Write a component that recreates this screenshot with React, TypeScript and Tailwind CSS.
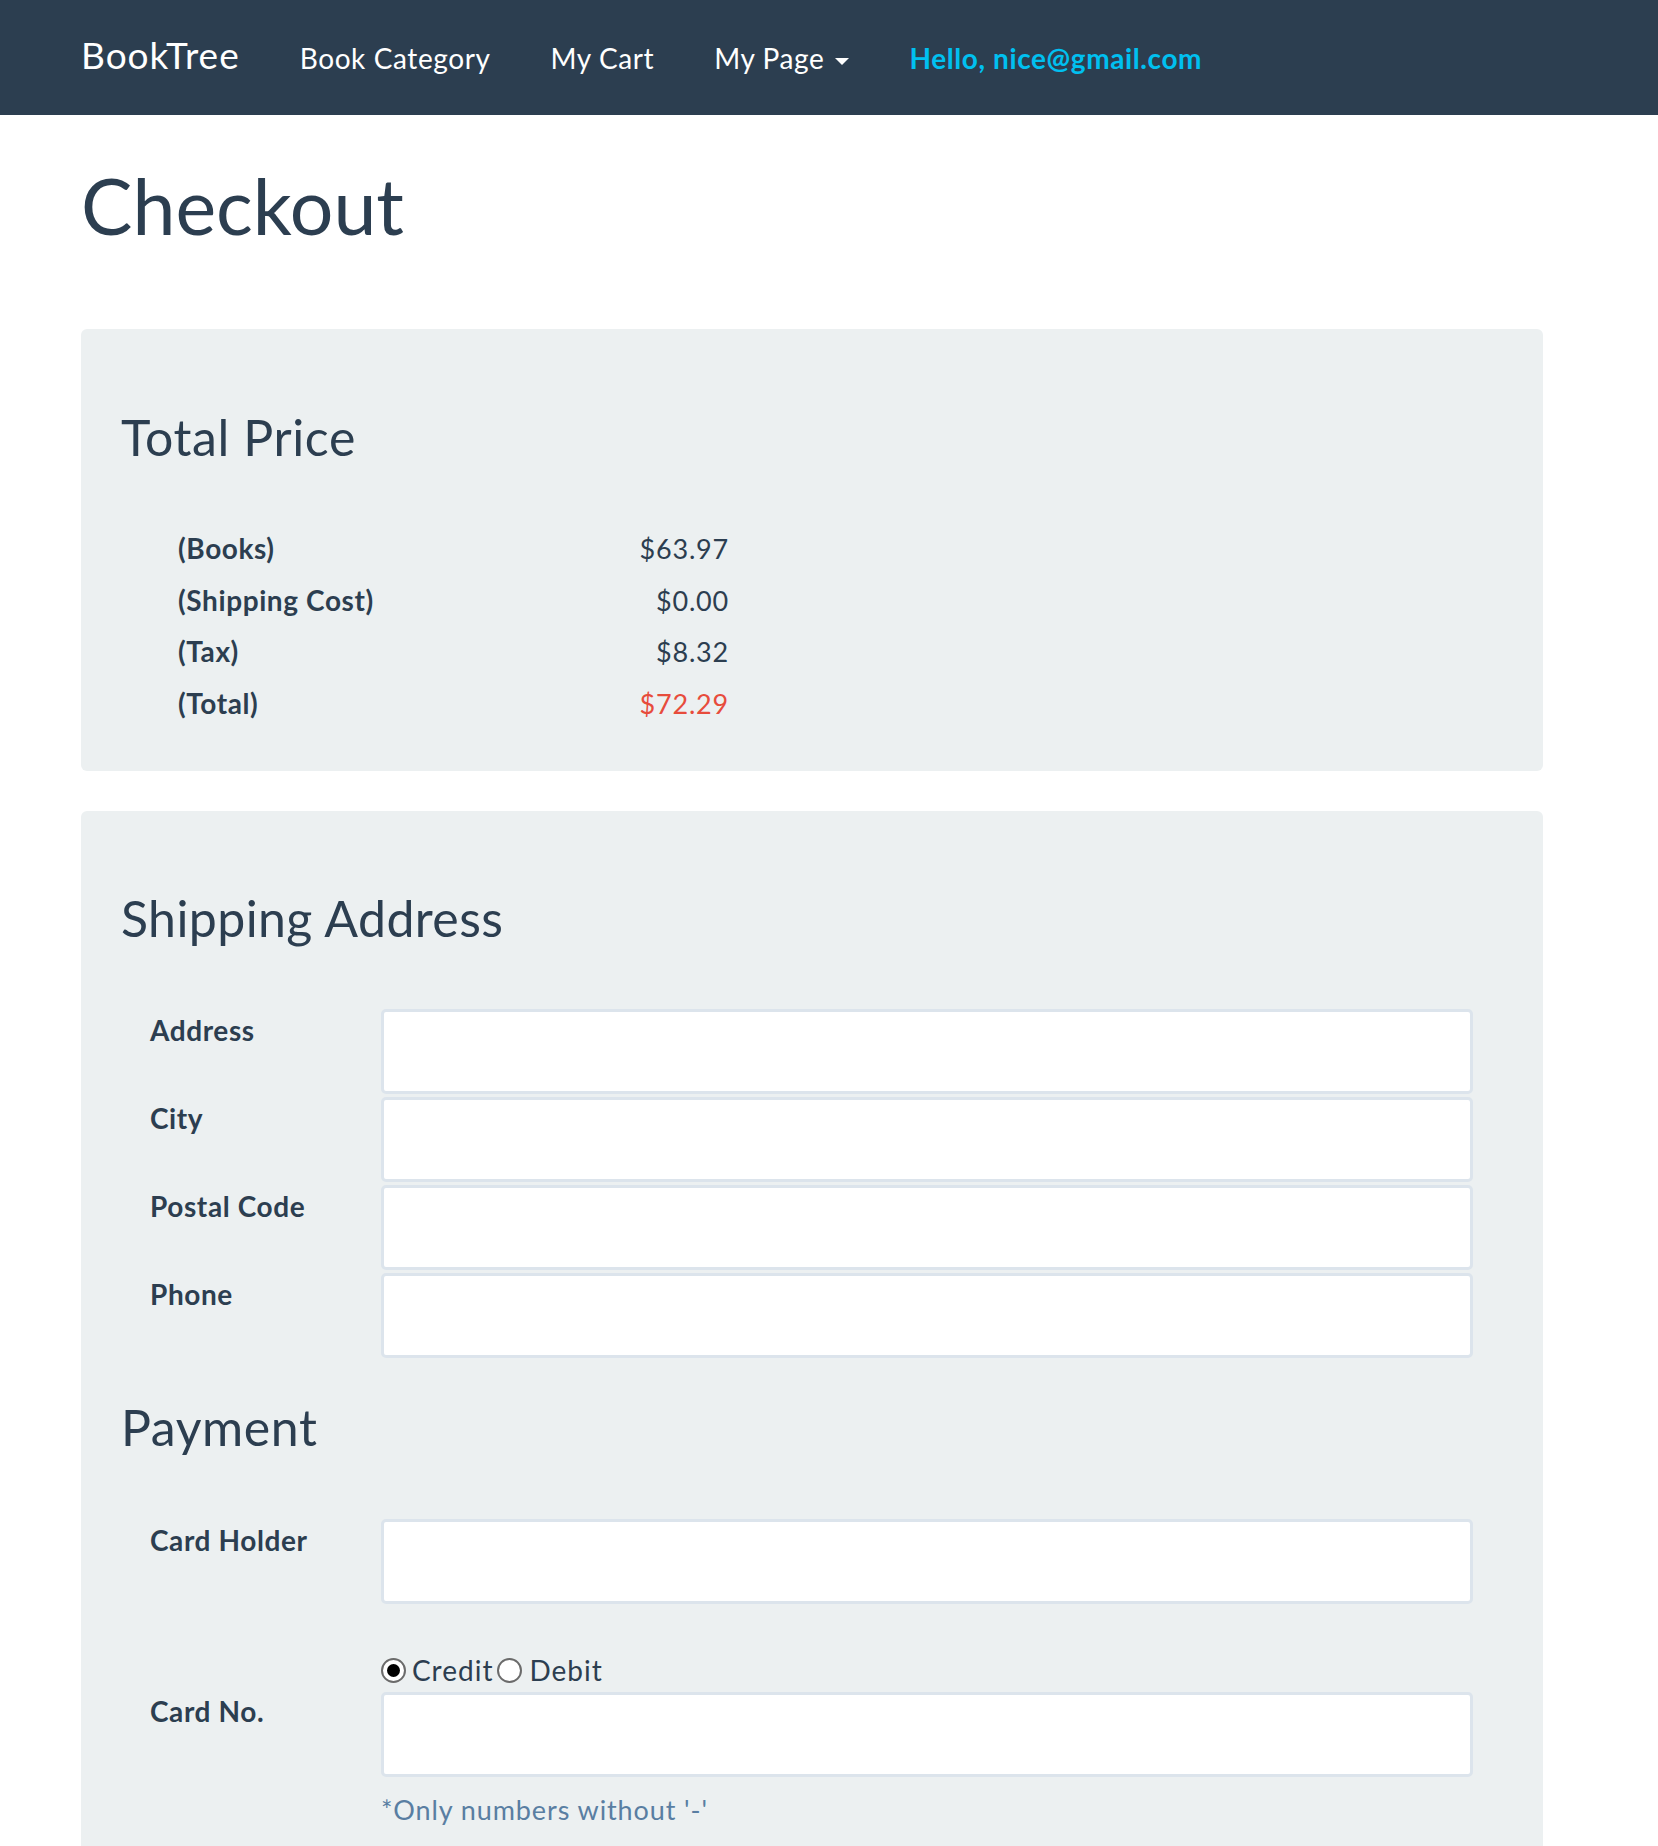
import React from "react";

const totals = [
    { label: "(Books)", value: "$63.97" },
    { label: "(Shipping Cost)", value: "$0.00" },
    { label: "(Tax)", value: "$8.32" },
    { label: "(Total)", value: "$72.29", red: true },
];

function Field({ label, className = "" }: { label: string; className?: string }) {
    return (
        <div className={`flex ${className}`}>
            <label className="w-[260px] pl-[29px] pt-[3px] text-[28px] font-bold leading-[37px] tracking-[0.6px]">{label}</label>
            <input
                type="text"
                className="h-[85px] w-[1092px] rounded-[5px] border-[3px] border-[#dce4ec] bg-white outline-none"
            />
        </div>
    );
}

function Radio({ checked }: { checked?: boolean }) {
    return (
        <span className="flex h-[25px] w-[25px] items-center justify-center rounded-full border-2 border-[#6b6b6b] bg-white">
            {checked && <span className="h-[13px] w-[13px] rounded-full bg-black" />}
        </span>
    );
}

export default function App() {
    return (
        <div className="min-h-screen bg-white font-[Lato,sans-serif] text-[#2c3e50]">
            <nav className="flex h-[115px] items-baseline gap-[60px] bg-[#2c3e50] pl-[81px] pt-[35px] text-white">
                <span className="text-[37px] leading-[40px] tracking-[1px]">BookTree</span>
                <span className="text-[28px] leading-[40px] tracking-[0.6px]">Book Category</span>
                <span className="text-[28px] leading-[40px] tracking-[0.6px]">My Cart</span>
                <span className="text-[28px] leading-[40px] tracking-[0.6px]">
                    My Page
                    <span className="ml-[11px] inline-block border-x-[7px] border-t-[7px] border-x-transparent border-t-white align-middle" />
                </span>
                <span className="text-[28px] font-bold leading-[40px] tracking-[0.6px] text-[#00c0f0]">Hello, nice@gmail.com</span>
            </nav>

            <main className="ml-[81px] w-[1462px]">
                <h1 className="mt-[48px] text-[77px] font-normal leading-[85px]">Checkout</h1>

                <section className="mt-[81px] rounded-[6px] bg-[#ecf0f1] px-[40px] pb-[42px] pt-[81px]">
                    <h2 className="text-[50px] leading-[55px] tracking-[0.6px]">Total Price</h2>
                    <div className="ml-[57px] mt-[58px] w-[551px] leading-[51.6px]">
                        {totals.map((t) => (
                            <div key={t.label} className="flex justify-between">
                                <span className="text-[28px] font-bold tracking-[0.6px]">{t.label}</span>
                                <span className={`text-[27px] tracking-[0.8px] ${t.red ? "text-[#e74c3c]" : ""}`}>{t.value}</span>
                            </div>
                        ))}
                    </div>
                </section>

                <section className="mt-[40px] rounded-[6px] bg-[#ecf0f1] px-[40px] pb-[60px] pt-[80px]">
                    <h2 className="text-[50px] leading-[55px] tracking-[0.4px]">Shipping Address</h2>
                    <div className="mt-[63px] flex flex-col gap-[3px]">
                        <Field label="Address" />
                        <Field label="City" />
                        <Field label="Postal Code" />
                        <Field label="Phone" />
                    </div>

                    <h2 className="mt-[42px] text-[50px] leading-[55px] tracking-[0.6px]">Payment</h2>
                    <Field label="Card Holder" className="mt-[64px]" />

                    <div className="mt-[46px] flex">
                        <label className="w-[260px] pl-[29px] pt-[43px] text-[28px] font-bold leading-[37px] tracking-[0.6px]">Card No.</label>
                        <div className="flex flex-col">
                            <div className="flex h-[40px] items-center text-[28px] leading-[40px] tracking-[1px]">
                                <Radio checked />
                                <span className="ml-[6px] mr-[4px]">Credit</span>
                                <Radio />
                                <span className="ml-[7px]">Debit</span>
                            </div>
                            <input
                                type="text"
                                className="mt-[2px] h-[85px] w-[1092px] rounded-[5px] border-[3px] border-[#dce4ec] bg-white outline-none"
                            />
                            <p className="mt-[14px] text-[27px] leading-[37px] tracking-[0.9px] text-[#597ea2]">*Only numbers without '-'</p>
                        </div>
                    </div>
                </section>
            </main>
        </div>
    );
}
